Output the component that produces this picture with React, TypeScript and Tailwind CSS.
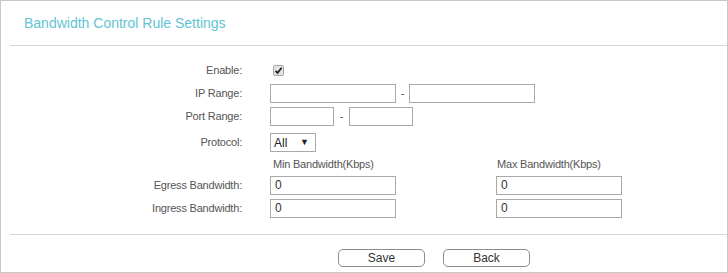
import React from 'react';

const font = { fontFamily: '"Liberation Sans", Arial, sans-serif' };

function TextBox({ w, value = '' }: { w: string; value?: string }) {
  return (
    <div className={`${w} h-[19px] border border-[#a9a9a9] bg-white px-[4px] text-[12px] leading-[17px] text-[#333]`}>
      {value}
    </div>
  );
}

function Label({ children }: { children: React.ReactNode }) {
  return <div className="w-[241px] shrink-0 text-right text-[11px] tracking-[-0.2px] text-[#555]">{children}</div>;
}

export default function App() {
  return (
    <div style={font} className="w-[728px] h-[273px] border border-[#c8c8c8] bg-white flex flex-col">
      {/* Header */}
      <div className="h-[44px] pl-[23px] pt-[10px]">
        <span className="text-[14px] text-[#62c4d4]">Bandwidth Control Rule Settings</span>
      </div>
      <div className="ml-[9px] h-px bg-[#d6d6d6]" />

      {/* Form */}
      <div className="pt-[13px] flex flex-col">
        <div className="h-[23px] flex items-center">
          <Label>Enable:</Label>
          <div className="ml-[31px] w-[11px] h-[11px] border border-[#a6a6a6] bg-[#e4e4e4] rounded-[2px] flex items-center justify-center">
            <svg width="9" height="9" viewBox="0 0 9 9">
              <path d="M1.5 4.8 L3.6 6.8 L7.6 1.8" fill="none" stroke="#222" strokeWidth="1.8" />
            </svg>
          </div>
        </div>

        <div className="h-[23px] flex items-center">
          <Label>IP Range:</Label>
          <div className="ml-[28px] flex items-center">
            <TextBox w="w-[126px]" />
            <span className="w-[13px] text-center text-[11px] text-[#555]">-</span>
            <TextBox w="w-[126px]" />
          </div>
        </div>

        <div className="h-[23px] flex items-center">
          <Label>Port Range:</Label>
          <div className="ml-[28px] flex items-center">
            <TextBox w="w-[64px]" />
            <span className="w-[15px] text-center text-[11px] text-[#555]">-</span>
            <TextBox w="w-[64px]" />
          </div>
        </div>

        <div className="h-[29px] flex items-center">
          <Label>Protocol:</Label>
          <div className="ml-[28px] w-[46px] h-[19px] border border-[#a9a9a9] bg-white flex items-center justify-between pl-[3px] pr-[6px]">
            <span className="text-[12px] text-[#222]">All</span>
            <span className="text-[9px] text-[#222]">▼</span>
          </div>
        </div>

        <div className="h-[14px] flex items-center">
          <div className="w-[241px] shrink-0" />
          <div className="ml-[31px] w-[224px] text-[11px] tracking-[-0.2px] text-[#555]">Min Bandwidth(Kbps)</div>
          <div className="text-[11px] tracking-[-0.2px] text-[#555]">Max Bandwidth(Kbps)</div>
        </div>

        <div className="mt-[3px] h-[23px] flex items-center">
          <Label>Egress Bandwidth:</Label>
          <div className="ml-[28px] flex items-center gap-[100px]">
            <TextBox w="w-[126px]" value="0" />
            <TextBox w="w-[126px]" value="0" />
          </div>
        </div>

        <div className="h-[23px] flex items-center">
          <Label>Ingress Bandwidth:</Label>
          <div className="ml-[28px] flex items-center gap-[100px]">
            <TextBox w="w-[126px]" value="0" />
            <TextBox w="w-[126px]" value="0" />
          </div>
        </div>
      </div>

      <div className="mt-[14px] ml-[9px] h-px bg-[#d6d6d6]" />

      {/* Buttons */}
      <div className="pt-[14px] pl-[337px] flex gap-[18px]">
        <button className="w-[87px] h-[18px] border border-[#8c8c8c] rounded-[5px] bg-white text-[12px] leading-[16px] text-[#333]">
          Save
        </button>
        <button className="w-[87px] h-[18px] border border-[#8c8c8c] rounded-[5px] bg-white text-[12px] leading-[16px] text-[#333]">
          Back
        </button>
      </div>
    </div>
  );
}
